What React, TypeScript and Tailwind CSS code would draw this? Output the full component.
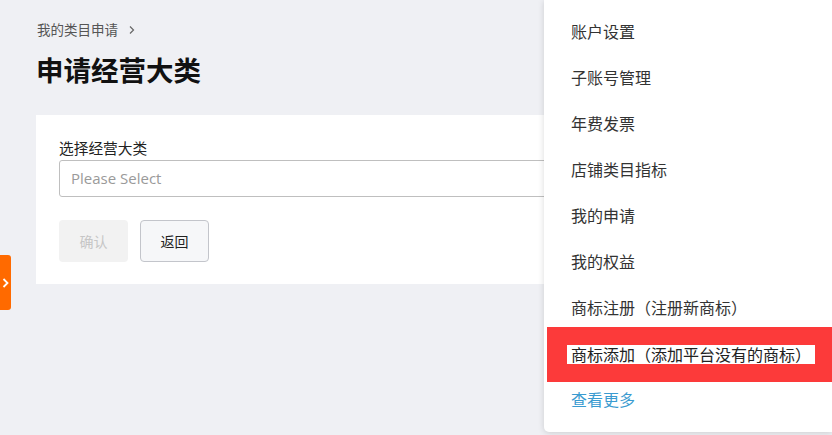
import React from "react";

const items = [
  "账户设置",
  "子账号管理",
  "年费发票",
  "店铺类目指标",
  "我的申请",
  "我的权益",
  "商标注册（注册新商标）",
];

export default function App() {
  return (
    <div
      className="relative w-[832px] h-[435px] overflow-hidden bg-[#eff0f4]"
      style={{ fontFamily: '"Noto Sans CJK SC", "Noto Sans", sans-serif' }}
    >
      <div className="pl-[36px] pr-[36px] pt-[18px]">
        <div className="flex items-center gap-[8px] pl-[1px] h-[22px] text-[13.5px] text-[#555]">
          <span>我的类目申请</span>
          <svg width="12" height="12" viewBox="0 0 12 12" className="mt-[1px]">
            <path d="M4 2.5 L7.5 6 L4 9.5" fill="none" stroke="#666" strokeWidth="1.2" />
          </svg>
        </div>
        <h1 className="mt-[10px] h-[38px] text-[27.5px] leading-[38px] font-bold text-[#111]">
          申请经营大类
        </h1>
        <div className="mt-[27px] h-[169px] bg-white px-[23px] pt-[22px]">
          <div className="text-[14.7px] leading-[22px] text-[#222]">选择经营大类</div>
          <div className="mt-[1px] h-[37px] w-full rounded-[3px] border border-[#bfbfbf] flex items-center pl-[11px]">
            <span
              className="text-[15px] text-[#9a9a9a]"
              style={{ fontFamily: '"Open Sans", sans-serif' }}
            >
              Please Select
            </span>
          </div>
          <div className="mt-[23px] flex gap-[12px]">
            <div className="w-[69px] h-[42px] rounded-[4px] bg-[#f2f2f2] flex items-center justify-center text-[14px] text-[#c6c6c6]">
              确认
            </div>
            <div className="w-[69px] h-[42px] rounded-[4px] bg-[#f6f7f9] border border-[#c3c5cb] flex items-center justify-center text-[14px] text-[#222]">
              返回
            </div>
          </div>
        </div>
      </div>

      <div className="absolute left-0 top-[255px] w-[11px] h-[55px] rounded-r-[3px] bg-[#ff6a00] flex items-center justify-center">
        <svg width="10" height="14" viewBox="0 0 10 14">
          <path d="M2.5 3 L6.5 7 L2.5 11" fill="none" stroke="#fff" strokeWidth="1.8" />
        </svg>
      </div>

      <div className="absolute right-0 top-0 w-[288px] h-[432px] bg-white rounded-bl-[5px] shadow-[0_1px_6px_rgba(0,0,0,0.15)] pt-[8px]">
        {items.map((t) => (
          <div key={t} className="h-[46px] flex items-center pl-[27px] text-[16px] text-[#333]">
            {t}
          </div>
        ))}
        <div className="ml-[3px] mt-[-3px] mb-[-6px] h-[55px] bg-[#fc3a3a] flex items-center pl-[20px]">
          <span className="bg-white px-[4px] leading-[19px] text-[16px] text-[#222]">
            商标添加（添加平台没有的商标）
          </span>
        </div>
        <div className="h-[46px] flex items-center pl-[27px] text-[16px] text-[#3a9bd0]">
          查看更多
        </div>
      </div>
    </div>
  );
}
